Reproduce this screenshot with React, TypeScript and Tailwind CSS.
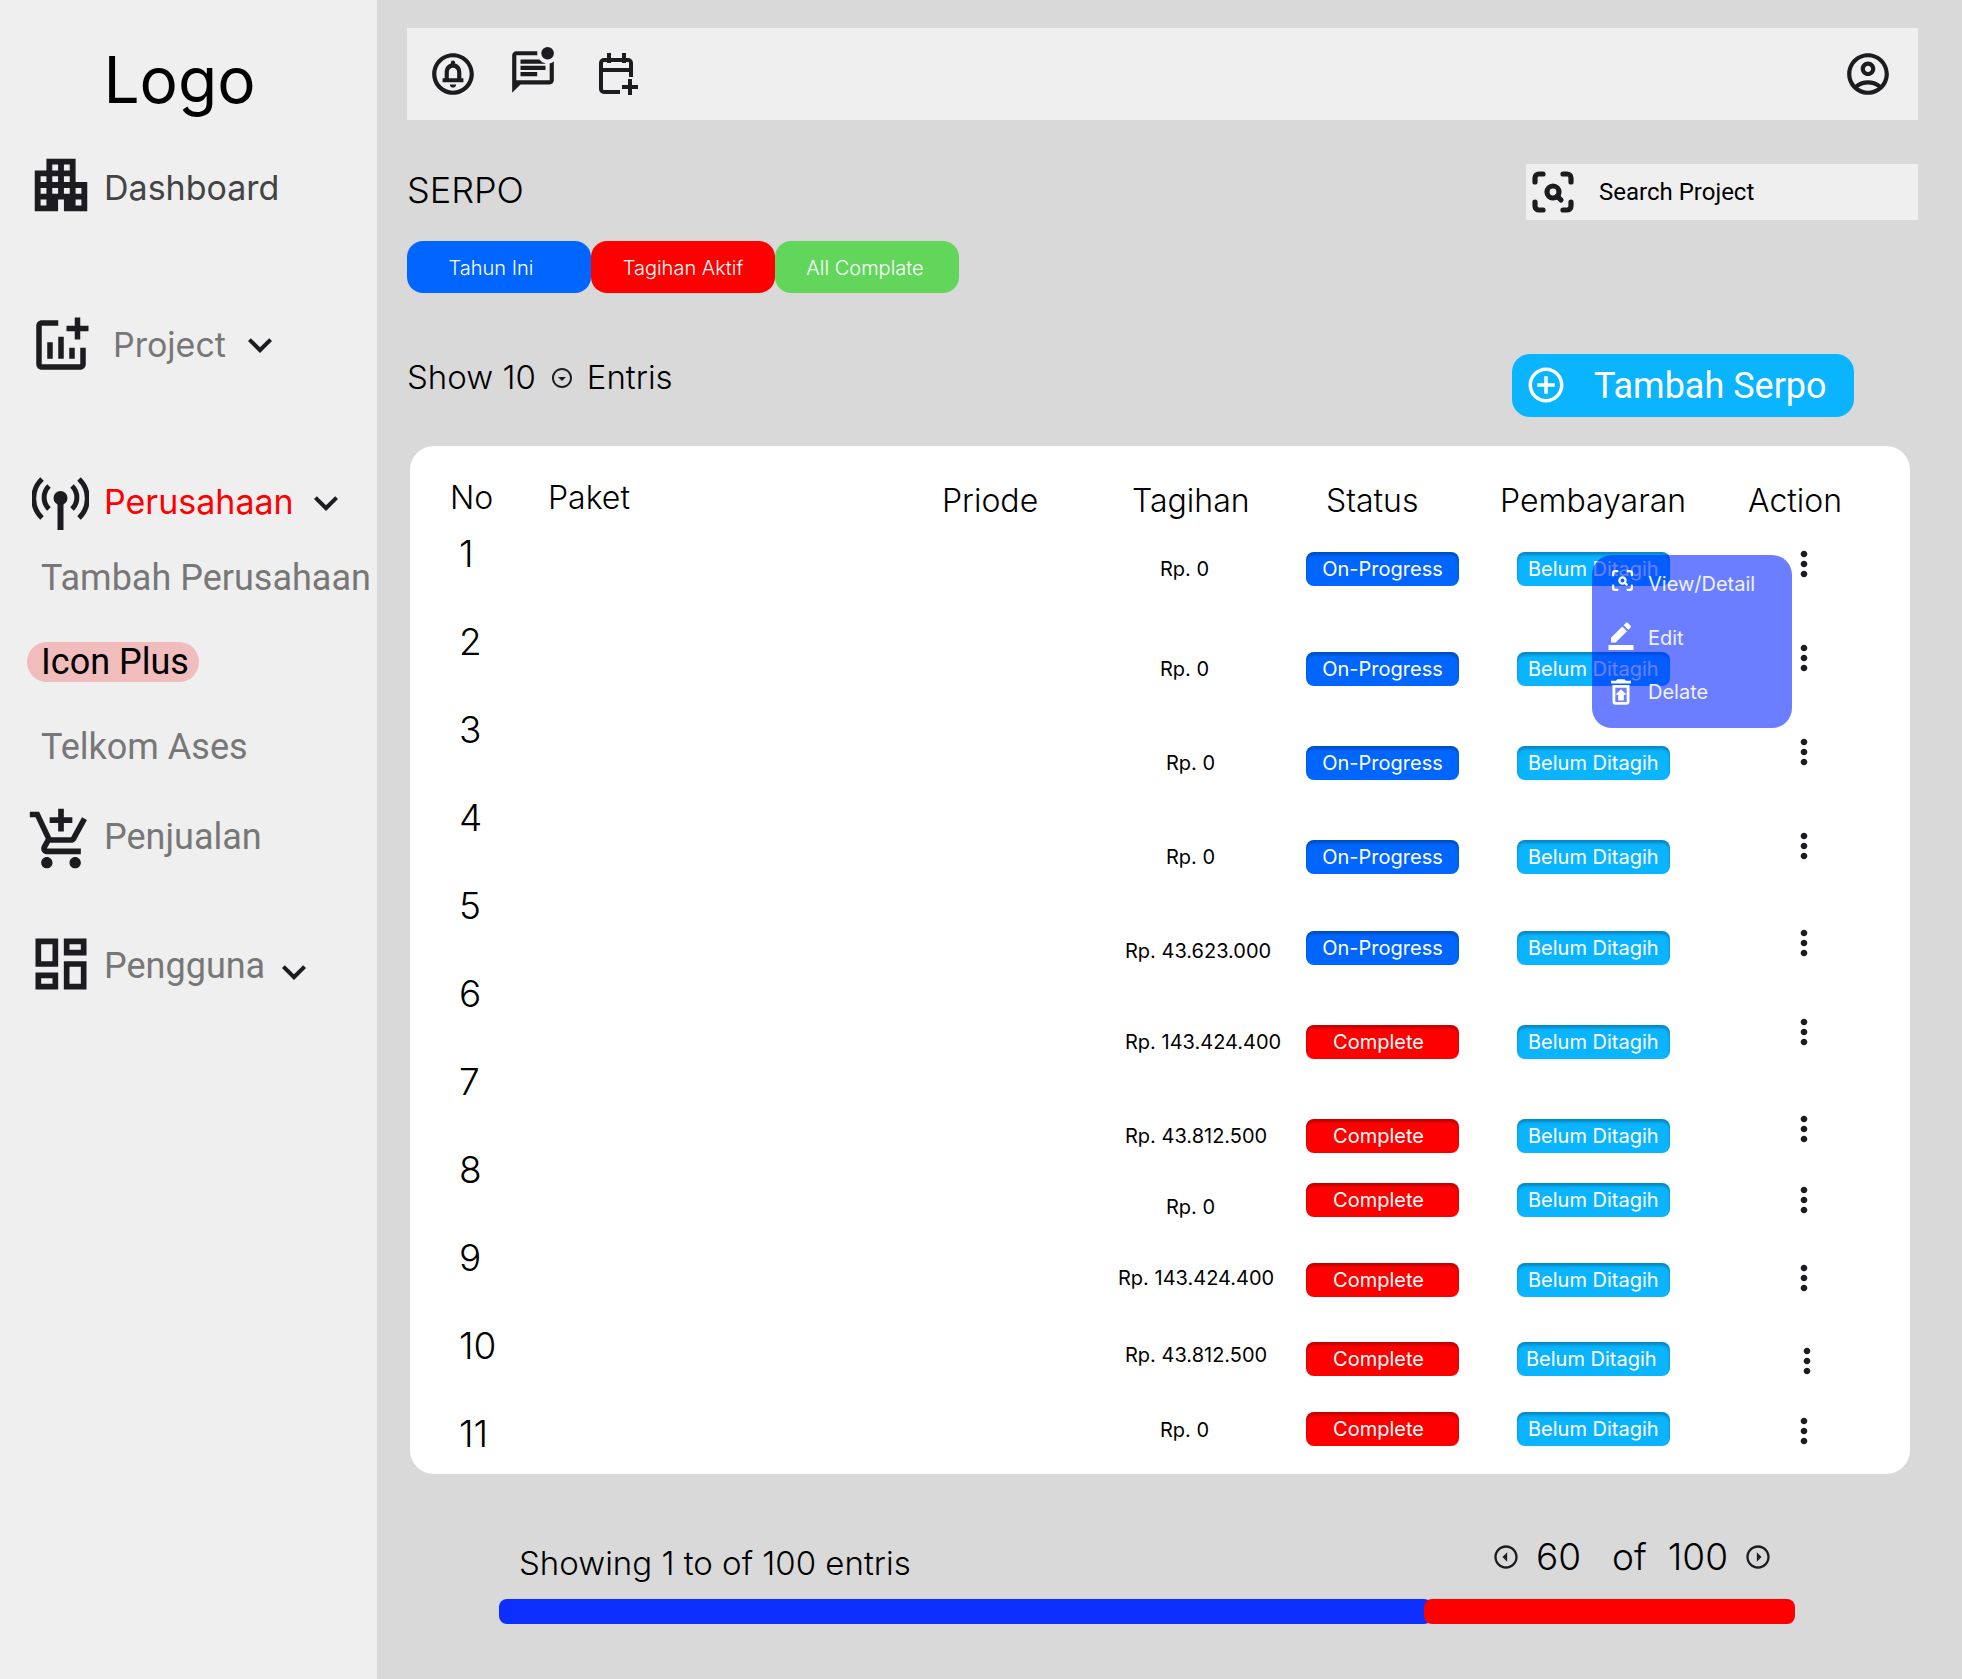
import React from "react";
import { ScanSearch } from "lucide-react";
import {
  MdApartment,
  MdOutlineAddchart,
  MdOutlineAddShoppingCart,
  MdOutlineDashboard,
  MdExpandMore,
  MdOutlineCircleNotifications,
  MdOutlineMarkUnreadChatAlt,
  MdOutlineAccountCircle,
  MdOutlineAddCircleOutline,
  MdOutlineArrowDropDownCircle,
  MdBorderColor,
  MdOutlineRestoreFromTrash,
  MdMoreVert,
} from "react-icons/md";

const ICON = "#1c1b1f";

const rows = [
  { rp: "Rp. 0", rpClass: "ml-[42px] mt-[19px]", status: "On-Progress", dots: "mt-[6px]", top: "mt-[20px]" },
  { rp: "Rp. 0", rpClass: "ml-[42px] mt-[19px]", status: "On-Progress", dots: "mt-0", top: "mt-[60px]" },
  { rp: "Rp. 0", rpClass: "ml-[48px] mt-[19px]", status: "On-Progress", dots: "mt-0", top: "mt-[54px]" },
  { rp: "Rp. 0", rpClass: "ml-[48px] mt-[19px]", status: "On-Progress", dots: "mt-0", top: "mt-[54px]" },
  { rp: "Rp. 43.623.000", rpClass: "ml-[7px] mt-[22px]", status: "On-Progress", dots: "mt-[6px]", top: "mt-[51px]" },
  { rp: "Rp. 143.424.400", rpClass: "ml-[7px] mt-[19px]", status: "Complete", dots: "mt-[1px]", top: "mt-[54px]" },
  { rp: "Rp. 43.812.500", rpClass: "ml-[7px] mt-[19px]", status: "Complete", dots: "mt-[4px]", top: "mt-[54px]" },
  { rp: "Rp. 0", rpClass: "ml-[48px] mt-[26px]", status: "Complete", dots: "mt-[11px]", top: "mt-[24px]" },
  { rp: "Rp. 143.424.400", rpClass: "ml-0 mt-[17px]", status: "Complete", dots: "mt-[9px]", top: "mt-[40px]" },
  { rp: "Rp. 43.812.500", rpClass: "ml-[7px] mt-[15px]", status: "Complete", dots: "mt-[13px] ml-[3px]", top: "mt-[39px]" },
  { rp: "Rp. 0", rpClass: "ml-[42px] mt-[20px]", status: "Complete", dots: "mt-[13px]", top: "mt-[30px]" },
];

const CalendarAdd = () => (
  <svg width="40" height="42" viewBox="0 0 40 42" fill="none" stroke={ICON} strokeWidth="4">
    <path d="M32 24V10a3 3 0 0 0-3-3H5a3 3 0 0 0-3 3v26a3 3 0 0 0 3 3h16" />
    <path d="M10 0v10M25 0v10M2 17h30M31 26v16M23 34h16" />
  </svg>
);

const AntennaIcon = () => (
  <svg width="57" height="53" viewBox="0 0 57 53" fill="none" stroke={ICON} strokeWidth="5" className="flex-none">
    <path d="M10 2A27 27 0 0 0 10 41M47 2A27 27 0 0 1 47 41" />
    <path d="M17 9A16 16 0 0 0 17 32M40 9A16 16 0 0 1 40 32" />
    <circle cx="28.5" cy="21" r="7" fill={ICON} stroke="none" />
    <path d="M28.5 21V53" strokeWidth="6" />
  </svg>
);

const NavRow = ({
  icon,
  label,
  className,
  textClass,
  chevron,
}: {
  icon: React.ReactNode;
  label: string;
  className: string;
  textClass: string;
  chevron?: string;
}) => (
  <div className={`flex items-center h-[54px] pl-[24px] ${className}`}>
    <div className="w-[73px] flex-none flex justify-center">{icon}</div>
    <span className={`leading-[44px] ${textClass}`}>{label}</span>
    {chevron && (
      <span className={chevron}>
        <MdExpandMore size={48} color={ICON} />
      </span>
    )}
  </div>
);

const Sidebar = () => (
  <aside className="w-[377px] flex-none bg-[#efefef]">
    <div className="h-[160px] flex items-center justify-center pr-[18px] text-[64px] text-black">Logo</div>
    <NavRow
      className="mt-0"
      icon={<MdApartment size={70} color={ICON} className="flex-none -mt-[5px]" />}
      label="Dashboard"
      textClass="ml-[7px] mt-[2px] text-[34px] text-[#444444]"
    />
    <NavRow
      className="mt-[104px]"
      icon={<MdOutlineAddchart size={66} color={ICON} className="flex-none" />}
      label="Project"
      textClass="ml-[16px] text-[34px] text-[#777777]"
      chevron="ml-[10px]"
    />
    <NavRow
      className="mt-[104px]"
      icon={<AntennaIcon />}
      label="Perusahaan"
      textClass="ml-[7px] -mt-[2px] text-[34px] text-[#ff0000]"
      chevron="ml-[8px]"
    />
    <div className="mt-[26px] h-[44px] pl-[41px] text-[36px] leading-[44px] text-[#777777] font-['Roboto',sans-serif]">
      Tambah Perusahaan
    </div>
    <div className="mt-[42px] ml-[27px] w-[172px] h-[40px] pl-[14px] rounded-[20px] bg-[#f0bcbc] text-[36px] leading-[40px] text-black font-['Roboto',sans-serif]">
      Icon Plus
    </div>
    <div className="mt-[43px] h-[44px] pl-[41px] text-[36px] leading-[44px] text-[#777777] font-['Roboto',sans-serif]">
      Telkom Ases
    </div>
    <NavRow
      className="mt-[42px] font-['Roboto',sans-serif]"
      icon={<MdOutlineAddShoppingCart size={68} color={ICON} className="flex-none mt-[4px]" />}
      label="Penjualan"
      textClass="ml-[7px] -mt-[2px] text-[36px] text-[#777777]"
    />
    <NavRow
      className="mt-[74px] font-['Roboto',sans-serif]"
      icon={<MdOutlineDashboard size={68} color={ICON} className="flex-none -mt-[4px]" />}
      label="Pengguna"
      textClass="ml-[7px] text-[36px] text-[#777777]"
      chevron="ml-[5px] mt-[12px]"
    />
  </aside>
);

const Pill = ({ className, children }: { className: string; children: React.ReactNode }) => (
  <div
    className={`w-[153px] h-[34px] rounded-[8px] flex items-center text-[20px] text-white shadow-[inset_0_3px_3px_rgba(0,0,0,0.25)] ${className}`}
  >
    {children}
  </div>
);

const Popup = () => (
  <div className="absolute left-[1182px] top-[109px] w-[200px] h-[173px] rounded-[20px] bg-[rgba(0,32,255,0.58)] pl-[18px] pt-[1px] text-[20px] text-white/90">
    <div className="flex items-center h-[54px] mt-[1px]">
      <span className="w-[38px] flex-none -mt-[8px]">
        <ScanSearch size={25} color="white" strokeWidth={2.2} />
      </span>
      View/Detail
    </div>
    <div className="flex items-center h-[54px]">
      <span className="w-[38px] flex-none -mt-[7px]">
        <MdBorderColor size={30} color="white" className="-ml-[4px]" />
      </span>
      Edit
    </div>
    <div className="flex items-center h-[54px]">
      <span className="w-[38px] flex-none">
        <MdOutlineRestoreFromTrash size={34} color="white" className="-ml-[6px]" />
      </span>
      Delate
    </div>
  </div>
);

const DataCard = () => (
  <div className="relative ml-[3px] w-[1500px] h-[1028px] rounded-[24px] bg-white">
    <div className="flex h-[36px] pt-[36px] pl-[40px] text-[32px] leading-[32px] font-light text-black box-content">
      <span className="w-[98px]">No</span>
      <span className="w-[394px]">Paket</span>
      <span className="w-[190px] mt-[3px]">Priode</span>
      <span className="w-[194px] mt-[3px]">Tagihan</span>
      <span className="w-[174px] mt-[3px]">Status</span>
      <span className="w-[248px] mt-[3px]">Pembayaran</span>
      <span className="mt-[3px]">Action</span>
    </div>
    <div className="flex">
      <div className="w-[708px] flex-none pl-[49px] flex flex-col gap-[16px]">
        {Array.from({ length: 11 }).map((_, i) => (
          <div key={i} className="h-[72px] flex items-center text-[37px] font-light text-black">
            {i + 1}
          </div>
        ))}
      </div>
      <div className="flex-1">
        {rows.map((row, i) => (
          <div key={i} className={`flex h-[40px] ${row.top}`}>
            <div className="w-[188px] flex-none text-[20px] leading-[24px] text-black">
              <div className={row.rpClass}>{row.rp}</div>
            </div>
            <div className="w-[211px] flex-none mt-[14px]">
              {row.status === "Complete" ? (
                <Pill className="bg-[#ff0000] justify-center pr-[8px]">{row.status}</Pill>
              ) : (
                <Pill className="bg-[#0066ff] justify-center">{row.status}</Pill>
              )}
            </div>
            <div className="w-[267px] flex-none mt-[14px]">
              <Pill className={`bg-[#0ab4ff] ${i === 9 ? "pl-[9px]" : "pl-[11px]"}`}>Belum Ditagih</Pill>
            </div>
            <div className={row.dots}>
              <MdMoreVert size={40} color={ICON} />
            </div>
          </div>
        ))}
      </div>
    </div>
    <Popup />
  </div>
);

const App: React.FC = () => {
  return (
    <div className="flex w-full min-h-[1679px] bg-[#d9d9d9] font-['Inter',sans-serif] overflow-hidden">
      <Sidebar />
      <main className="flex-1 pl-[30px] pr-[44px] pt-[28px]">
        {/* Top bar */}
        <header className="h-[92px] bg-[#efefef] flex items-center pl-[25px] pr-[25px]">
          <MdOutlineCircleNotifications size={50} color={ICON} className="-ml-[4px]" />
          <MdOutlineMarkUnreadChatAlt size={50} color={ICON} className="ml-[30px] -mt-[4px]" />
          <span className="ml-[41px]">
            <CalendarAdd />
          </span>
          <MdOutlineAccountCircle size={50} color={ICON} className="ml-auto" />
        </header>

        {/* Title + search */}
        <div className="mt-[44px] h-[56px] flex items-center justify-between">
          <h1 className="text-[36px] font-light text-black -mt-[4px]">SERPO</h1>
          <div className="w-[392px] h-[56px] bg-[#efefef] flex items-center pl-[3px] font-['Roboto',sans-serif]">
            <ScanSearch size={48} color={ICON} strokeWidth={2.6} />
            <span className="ml-[22px] text-[24px] text-black">Search Project</span>
          </div>
        </div>

        {/* Filters */}
        <div className="mt-[21px] flex text-[20px] font-light text-white">
          <button className="w-[184px] h-[52px] rounded-[16px] bg-[#0066ff] pr-[16px] pt-[2px]">Tahun Ini</button>
          <button className="w-[184px] h-[52px] rounded-[16px] bg-[#ff0000] pt-[2px]">Tagihan Aktif</button>
          <button className="w-[184px] h-[52px] rounded-[16px] bg-[#62d65b] pr-[4px] pt-[2px]">All Complate</button>
        </div>

        {/* Entries + add */}
        <div className="mt-[61px] flex items-start justify-between pr-[64px]">
          <div className="h-[48px] flex items-center text-[33px] font-light text-black">
            Show 10
            <MdOutlineArrowDropDownCircle size={24} color={ICON} className="ml-[14px]" />
            <span className="ml-[13px]">Entris</span>
          </div>
          <button className="w-[342px] h-[63px] rounded-[18px] bg-[#0ab4ff] flex items-center pl-[13px] text-white font-['Roboto',sans-serif]">
            <MdOutlineAddCircleOutline size={42} color="white" className="-mt-[2px]" />
            <span className="ml-[27px] text-[36px]">Tambah Serpo</span>
          </button>
        </div>

        <div className="mt-[29px]">
          <DataCard />
        </div>

        {/* Pagination */}
        <div className="mt-[61px] flex items-start pl-[112px] pr-[146px] text-black">
          <span className="mt-[6px] text-[33px] leading-[44px] font-light">Showing 1 to of 100 entris</span>
          <div className="ml-auto flex items-center h-[44px] text-[37px] font-light">
            <MdOutlineArrowDropDownCircle size={28} color={ICON} className="rotate-90" />
            <span className="ml-[16px]">60</span>
            <span className="ml-[31px]">of</span>
            <span className="ml-[21px]">100</span>
            <MdOutlineArrowDropDownCircle size={28} color={ICON} className="-rotate-90 ml-[16px]" />
          </div>
        </div>
        <div className="mt-[14px] ml-[92px] w-[1296px] h-[25px] flex">
          <div className="w-[933px] h-full rounded-[8px] bg-[#0c2eff]" />
          <div className="flex-1 -ml-[8px] h-full rounded-[8px] bg-[#ff0000]" />
        </div>
      </main>
    </div>
  );
};

export default App;
